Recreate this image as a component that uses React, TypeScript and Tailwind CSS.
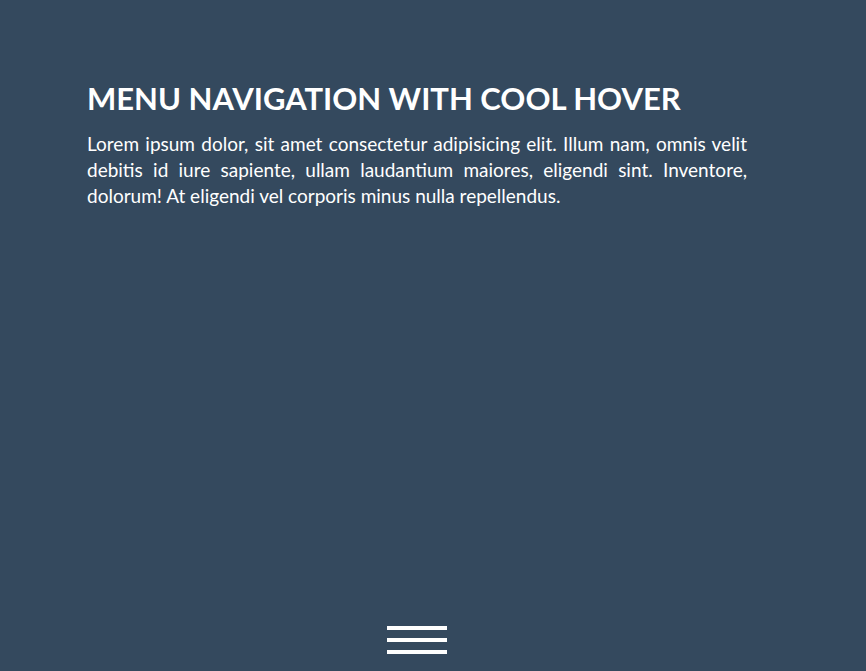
export default function App() {
  return (
    <div className="min-h-screen flex flex-col bg-[#34495e] text-white font-['Lato','Liberation_Sans',sans-serif]">
      <section className="ml-[87px] w-[660px] pt-[78px]">
        <h1 className="text-[31px] leading-[40px] font-bold uppercase">
          Menu navigation with cool hover
        </h1>
        <p className="mt-[13px] text-[19px] leading-[26px] text-justify">
          Lorem ipsum dolor, sit amet consectetur adipisicing elit. Illum nam,
          omnis velit debitis id iure sapiente, ullam laudantium maiores,
          eligendi sint. Inventore, dolorum! At eligendi vel corporis minus
          nulla repellendus.
        </p>
      </section>
      <div className="flex-1" />
      <button className="ml-[387px] mb-[17px] flex w-[60px] flex-col gap-[8px]">
        <span className="block h-[4px] w-full bg-white" />
        <span className="block h-[4px] w-full bg-white" />
        <span className="block h-[4px] w-full bg-white" />
      </button>
    </div>
  );
}
